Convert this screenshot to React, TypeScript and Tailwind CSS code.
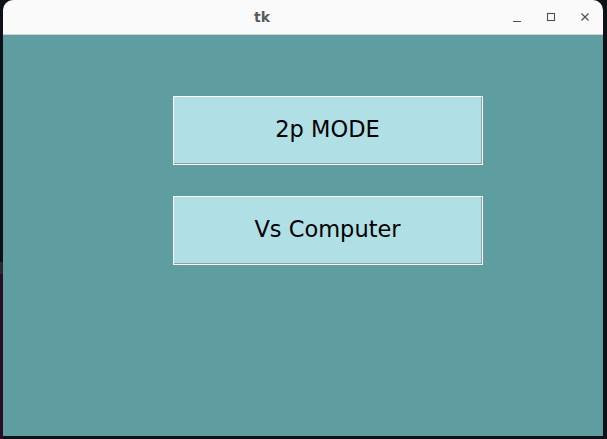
import React from 'react'

function ModeButton({ label }: { label: string }) {
  return (
    <button
      type="button"
      className="w-[310px] h-[69px] border border-white bg-[#b0e0e6]"
    >
      <span className="flex h-full w-full items-center justify-center border-r border-b border-[#8c9fa2] text-[22.5px] text-black font-['DejaVu_Sans',sans-serif]">
        {label}
      </span>
    </button>
  )
}

export default function App() {
  return (
    <div className="flex w-[607px] h-[439px] overflow-hidden bg-[#0e1217]">
      {/* desktop behind the window, left strip */}
      <div className="flex w-[3px] flex-col">
        <div className="h-[262px] bg-[#0d1116]" />
        <div className="h-[12px] bg-[#2a2a2a]" />
        <div className="flex-1 bg-[#2c0d27]" />
      </div>

      {/* tk window */}
      <div className="flex w-[600px] h-[436px] flex-col overflow-hidden rounded-t-[10px]">
        {/* Title bar */}
        <div className="flex h-[35px] shrink-0 items-center border-b border-[#d2d2d2] bg-[#fafafa] font-['DejaVu_Sans',sans-serif]">
          <span className="ml-[251px] text-[14px] font-bold text-[#5a5a5a]">
            tk
          </span>
          <div className="ml-auto mr-[10px] flex items-center gap-[18px] text-[#505050]">
            <svg width="16" height="16" viewBox="0 0 16 16" className="mt-[2px]">
              <path d="M4 11.5h8" stroke="currentColor" strokeWidth="1.2" />
            </svg>
            <svg width="16" height="16" viewBox="0 0 16 16">
              <rect
                x="4.5"
                y="4.5"
                width="7"
                height="7"
                fill="none"
                stroke="currentColor"
                strokeWidth="1.1"
              />
            </svg>
            <svg width="16" height="16" viewBox="0 0 16 16">
              <path
                d="M4.5 4.5l7 7M11.5 4.5l-7 7"
                stroke="currentColor"
                strokeWidth="1.2"
              />
            </svg>
          </div>
        </div>

        {/* Content */}
        <div className="flex flex-1 flex-col gap-[31px] bg-[#5f9ea0] pl-[170px] pt-[61px]">
          <ModeButton label="2p MODE" />
          <ModeButton label="Vs Computer" />
        </div>
      </div>
    </div>
  )
}
